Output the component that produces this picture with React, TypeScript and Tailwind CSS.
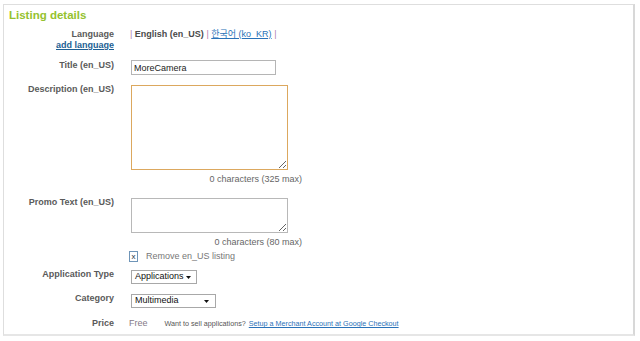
import React from "react";

const font = { fontFamily: '"Liberation Sans", Arial, "Noto Sans CJK KR", sans-serif' };

function Label({ children, className = "" }: { children: React.ReactNode; className?: string }) {
  return (
    <div className={`w-[110px] shrink-0 text-right text-[9px] font-bold leading-[11px] text-[#5a5a5a] ${className}`}>
      {children}
    </div>
  );
}

function Caret() {
  return (
    <svg width="5" height="3" viewBox="0 0 5 3" className="block">
      <path d="M0 0 H5 L2.5 3 Z" fill="#111" />
    </svg>
  );
}

export default function App() {
  return (
    <div className="w-[640px] h-[341px] bg-white pl-[3px] pt-[4px]" style={font}>
      <div className="w-[632px] h-[332px] border border-[#dedede] border-r-2 border-b-2 border-r-[#d8d8d8] border-b-[#e6e6e6] bg-white">
        {/* header */}
        <div className="pl-[5px] pt-[4px] text-[11.5px] font-bold leading-[12px] text-[#95c22e]">Listing details</div>

        {/* Language */}
        <div className="flex mt-[8px]">
          <Label>
            <div>Language</div>
            <a className="text-[#1d5f94] underline">add language</a>
          </Label>
          <div className="ml-[16px] text-[9px] leading-[11px] text-[#4a4a4a]">
            <span className="text-[#b07fb0]">|</span> <span className="font-bold">English (en_US)</span>{" "}
            <span className="text-[#b07fb0]">|</span>{" "}
            <a className="text-[#2a72b8] underline">한국어 (ko_KR)</a> <span className="text-[#b07fb0]">|</span>
          </div>
        </div>

        {/* Title */}
        <div className="flex mt-[9px]">
          <Label className="mt-[0px]">Title (en_US)</Label>
          <input
            readOnly
            defaultValue="MoreCamera"
            className="ml-[17px] h-[15px] w-[145px] border border-[#b5b5b5] bg-white px-[2px] text-[9px] leading-[13px] text-[#222] outline-none"
            style={font}
          />
        </div>

        {/* Description */}
        <div className="flex mt-[10px]">
          <Label className="mt-[-1px]">Description (en_US)</Label>
          <div className="ml-[17px] flex flex-col">
            <textarea
              readOnly
              className="h-[85px] w-[157px] border border-[#dca85e] bg-white outline-none"
            />
            <div className="w-[171px] mt-[4px] text-right text-[9px] leading-[11px] text-[#666]">0 characters (325 max)</div>
          </div>
        </div>

        {/* Promo */}
        <div className="flex mt-[13px]">
          <Label className="mt-[-1px]">Promo Text (en_US)</Label>
          <div className="ml-[17px] flex flex-col">
            <textarea
              readOnly
              className="h-[35px] w-[157px] border border-[#b8b8b8] bg-white outline-none"
            />
            <div className="w-[171px] mt-[4px] text-right text-[9px] leading-[11px] text-[#666]">0 characters (80 max)</div>
            <div className="flex items-center mt-[3px] ml-[-2px]">
              <div className="flex h-[11px] w-[9px] items-center justify-center border border-[#6f95b8] text-[8px] leading-[8px] text-[#234]">
                x
              </div>
              <span className="ml-[8px] text-[9px] leading-[11px] text-[#777]">Remove en_US listing</span>
            </div>
          </div>
        </div>

        {/* Application Type */}
        <div className="flex mt-[8px]">
          <Label className="mt-[-1px]">Application Type</Label>
          <div className="ml-[17px] flex h-[14px] w-[66px] items-center justify-between border border-[#a8a8a8] pl-[3px] pr-[5px] text-[9px] text-[#111]">
            <span>Applications</span>
            <Caret />
          </div>
        </div>

        {/* Category */}
        <div className="flex mt-[10px]">
          <Label className="mt-[-1px]">Category</Label>
          <div className="ml-[17px] flex h-[14px] w-[85px] items-center justify-between border border-[#a8a8a8] pl-[3px] pr-[6px] text-[9px] text-[#111]">
            <span>Multimedia</span>
            <Caret />
          </div>
        </div>

        {/* Price */}
        <div className="flex mt-[10px] items-baseline">
          <Label>Price</Label>
          <span className="ml-[15px] text-[9px] leading-[11px] text-[#857a88]">Free</span>
          <span className="ml-[17px] text-[7.2px] leading-[11px] text-[#555]">Want to sell applications?</span>
          <a className="ml-[3px] text-[7.2px] leading-[11px] text-[#2a72b8] underline">Setup a Merchant Account at Google Checkout</a>
        </div>
      </div>
    </div>
  );
}
